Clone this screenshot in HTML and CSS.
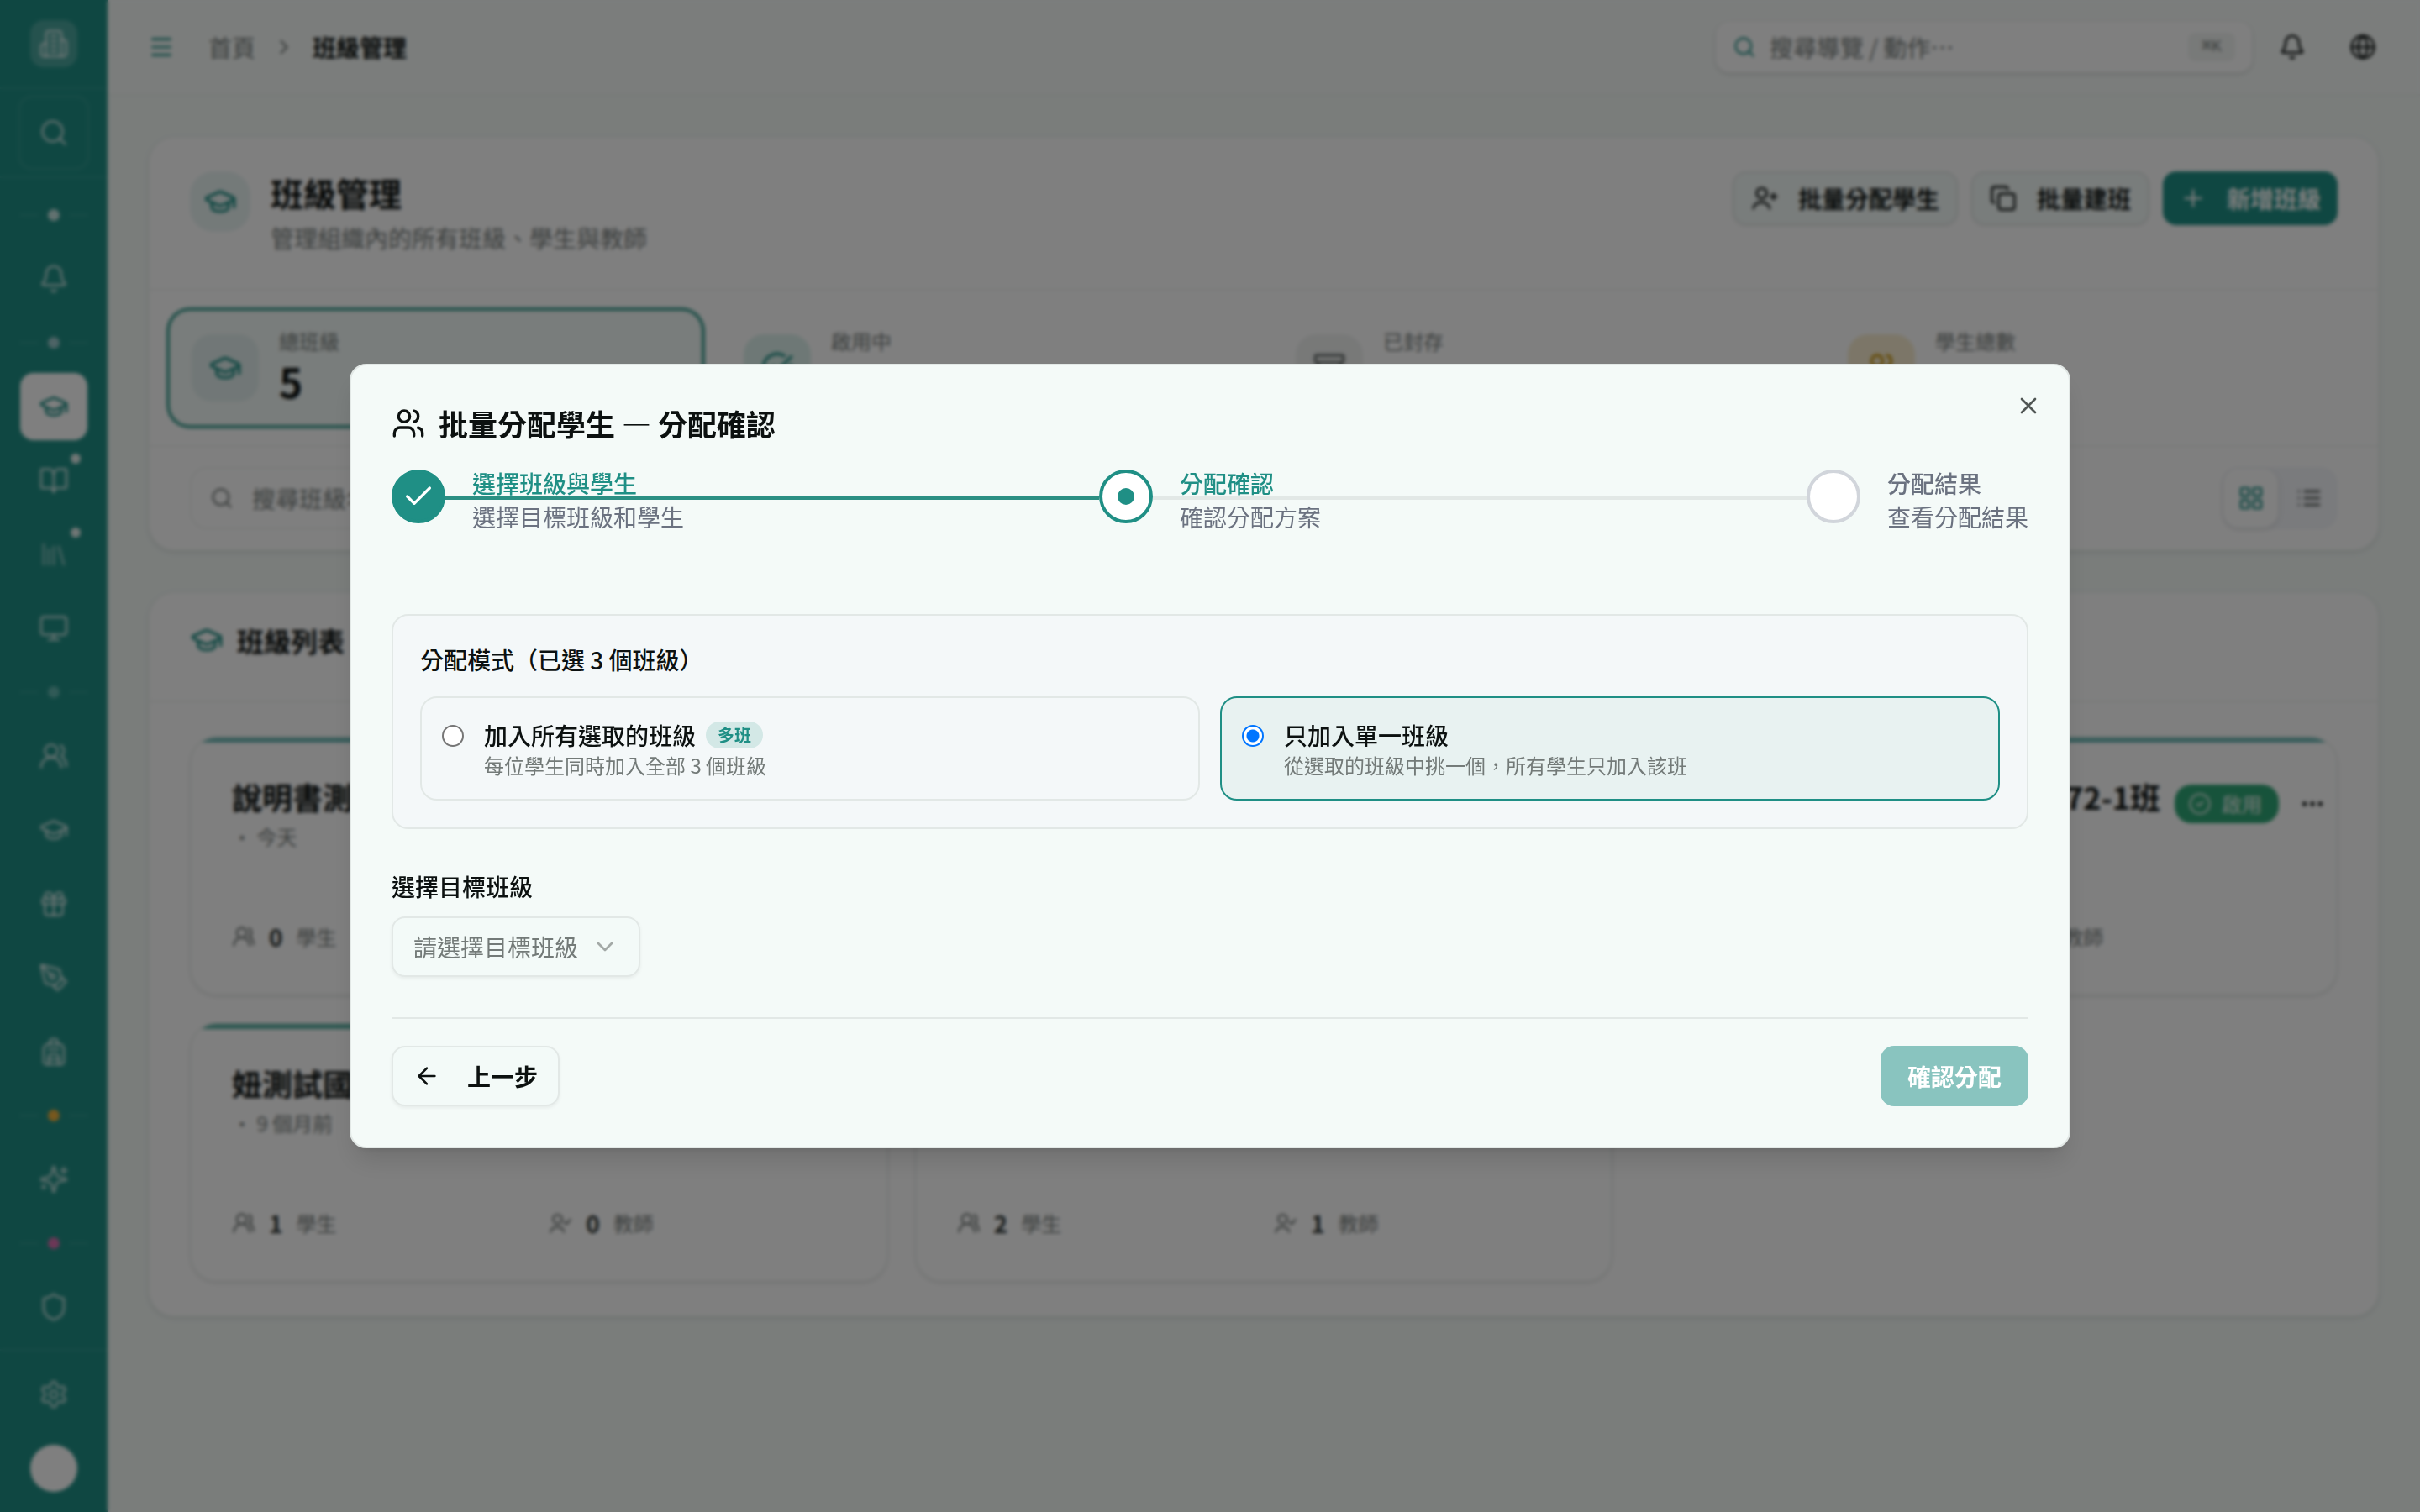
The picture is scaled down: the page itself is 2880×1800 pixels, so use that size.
FILE: index.html
```html
<!DOCTYPE html>
<html lang="zh-Hant">
<head>
<meta charset="utf-8">
<title>班級管理</title>
<link rel="stylesheet" href="styles.css">
</head>
<body>
<svg class="sprite" aria-hidden="true">
  <symbol id="i-building" viewBox="0 0 24 24"><path d="M6 22V4a2 2 0 0 1 2-2h8a2 2 0 0 1 2 2v18Z"/><path d="M6 12H4a2 2 0 0 0-2 2v6a2 2 0 0 0 2 2h2"/><path d="M18 9h2a2 2 0 0 1 2 2v9a2 2 0 0 1-2 2h-2"/><path d="M10 6h4M10 10h4M10 14h4M10 18h4"/></symbol>
  <symbol id="i-search" viewBox="0 0 24 24"><circle cx="11" cy="11" r="8"/><path d="m21 21-4.3-4.3"/></symbol>
  <symbol id="i-bell" viewBox="0 0 24 24"><path d="M10.268 21a2 2 0 0 0 3.464 0"/><path d="M3.262 15.326A1 1 0 0 0 4 17h16a1 1 0 0 0 .74-1.673C19.41 13.956 18 12.499 18 8A6 6 0 0 0 6 8c0 4.499-1.411 5.956-2.738 7.326"/></symbol>
  <symbol id="i-cap" viewBox="0 0 24 24"><path d="M21.42 10.922a1 1 0 0 0-.019-1.838L12.83 5.18a2 2 0 0 0-1.66 0L2.6 9.08a1 1 0 0 0 0 1.832l8.57 3.908a2 2 0 0 0 1.66 0z"/><path d="M22 10v6"/><path d="M6 12.5V16a6 3 0 0 0 12 0v-3.5"/></symbol>
  <symbol id="i-book" viewBox="0 0 24 24"><path d="M12 7v14"/><path d="M3 18a1 1 0 0 1-1-1V4a1 1 0 0 1 1-1h5a4 4 0 0 1 4 4 4 4 0 0 1 4-4h5a1 1 0 0 1 1 1v13a1 1 0 0 1-1 1h-6a3 3 0 0 0-3 3 3 3 0 0 0-3-3z"/></symbol>
  <symbol id="i-library" viewBox="0 0 24 24"><path d="m16 6 4 14"/><path d="M12 6v14"/><path d="M8 8v12"/><path d="M4 4v16"/></symbol>
  <symbol id="i-monitor" viewBox="0 0 24 24"><rect width="20" height="14" x="2" y="3" rx="2"/><path d="M8 21h8M12 17v4"/></symbol>
  <symbol id="i-users-round" viewBox="0 0 24 24"><path d="M18 21a8 8 0 0 0-16 0"/><circle cx="10" cy="8" r="5"/><path d="M22 20c0-3.37-2-6.5-4-8a5 5 0 0 0-.45-8.3"/></symbol>
  <symbol id="i-users" viewBox="0 0 24 24"><path d="M16 21v-2a4 4 0 0 0-4-4H6a4 4 0 0 0-4 4v2"/><circle cx="9" cy="7" r="4"/><path d="M22 21v-2a4 4 0 0 0-3-3.87"/><path d="M16 3.13a4 4 0 0 1 0 7.75"/></symbol>
  <symbol id="i-user-plus" viewBox="0 0 24 24"><path d="M2 21a7.5 7.5 0 0 1 14.500 0"/><circle cx="9.500" cy="7.500" r="4.500"/><path d="M20 8v5M22.500 10.500h-5"/></symbol>
  <symbol id="i-user-check" viewBox="0 0 24 24"><path d="M2 21a7 7 0 0 1 13.500 0"/><circle cx="9" cy="8" r="4.500"/><path d="m16 11 2 2 4-4.500"/></symbol>
  <symbol id="i-gift" viewBox="0 0 24 24"><rect x="3" y="8" width="18" height="4" rx="1"/><path d="M12 8v13"/><path d="M19 12v7a2 2 0 0 1-2 2H7a2 2 0 0 1-2-2v-7"/><path d="M7.5 8a2.5 2.5 0 0 1 0-5A4.8 8 0 0 1 12 8a4.8 8 0 0 1 4.5-5 2.5 2.5 0 0 1 0 5"/></symbol>
  <symbol id="i-pen" viewBox="0 0 24 24"><path d="M15.707 21.293a1 1 0 0 1-1.414 0l-1.586-1.586a1 1 0 0 1 0-1.414l5.586-5.586a1 1 0 0 1 1.414 0l1.586 1.586a1 1 0 0 1 0 1.414z"/><path d="m18 13-1.375-6.874a1 1 0 0 0-.746-.776L3.235 2.028a1 1 0 0 0-1.207 1.207L5.35 15.879a1 1 0 0 0 .776.746L13 18"/><path d="m2.3 2.3 7.286 7.286"/><circle cx="11" cy="11" r="2"/></symbol>
  <symbol id="i-backpack" viewBox="0 0 24 24"><path d="M4 10a4 4 0 0 1 4-4h8a4 4 0 0 1 4 4v10a2 2 0 0 1-2 2H6a2 2 0 0 1-2-2z"/><path d="M8 10h8M8 18h8"/><path d="M8 22v-6a2 2 0 0 1 2-2h4a2 2 0 0 1 2 2v6"/><path d="M9 6V4a2 2 0 0 1 2-2h2a2 2 0 0 1 2 2v2"/></symbol>
  <symbol id="i-sparkles" viewBox="0 0 24 24"><path d="M9.937 15.5A2 2 0 0 0 8.5 14.063l-6.135-1.582a.5.5 0 0 1 0-.962L8.5 9.936A2 2 0 0 0 9.937 8.5l1.582-6.135a.5.5 0 0 1 .963 0L14.063 8.5A2 2 0 0 0 15.5 9.937l6.135 1.581a.5.5 0 0 1 0 .964L15.5 14.063a2 2 0 0 0-1.437 1.437l-1.582 6.135a.5.5 0 0 1-.963 0z"/><path d="M20 3v4M22 5h-4M4 17v2M5 18H3"/></symbol>
  <symbol id="i-shield" viewBox="0 0 24 24"><path d="M20 13c0 5-3.5 7.5-7.66 8.95a1 1 0 0 1-.67-.01C7.5 20.5 4 18 4 13V6a1 1 0 0 1 1-1c2 0 4.5-1.2 6.24-2.72a1.17 1.17 0 0 1 1.52 0C14.51 3.81 17 5 19 5a1 1 0 0 1 1 1z"/></symbol>
  <symbol id="i-settings" viewBox="0 0 24 24"><path d="M12.22 2h-.44a2 2 0 0 0-2 2v.18a2 2 0 0 1-1 1.73l-.43.25a2 2 0 0 1-2 0l-.15-.08a2 2 0 0 0-2.73.73l-.22.38a2 2 0 0 0 .73 2.73l.15.1a2 2 0 0 1 1 1.72v.51a2 2 0 0 1-1 1.74l-.15.09a2 2 0 0 0-.73 2.73l.22.38a2 2 0 0 0 2.73.73l.15-.08a2 2 0 0 1 2 0l.43.25a2 2 0 0 1 1 1.73V20a2 2 0 0 0 2 2h.44a2 2 0 0 0 2-2v-.18a2 2 0 0 1 1-1.73l.43-.25a2 2 0 0 1 2 0l.15.08a2 2 0 0 0 2.73-.73l.22-.39a2 2 0 0 0-.73-2.73l-.15-.08a2 2 0 0 1-1-1.74v-.5a2 2 0 0 1 1-1.74l.15-.09a2 2 0 0 0 .73-2.73l-.22-.38a2 2 0 0 0-2.73-.73l-.15.08a2 2 0 0 1-2 0l-.43-.25a2 2 0 0 1-1-1.73V4a2 2 0 0 0-2-2z"/><circle cx="12" cy="12" r="3"/></symbol>
  <symbol id="i-menu" viewBox="0 0 24 24"><path d="M4 5h16M4 12h16M4 19h16"/></symbol>
  <symbol id="i-chevron-right" viewBox="0 0 24 24"><path d="m9 18 6-6-6-6"/></symbol>
  <symbol id="i-chevron-down" viewBox="0 0 24 24"><path d="m6 9 6 6 6-6"/></symbol>
  <symbol id="i-globe" viewBox="0 0 24 24"><circle cx="12" cy="12" r="10"/><path d="M12 2a14.5 14.5 0 0 0 0 20 14.5 14.5 0 0 0 0-20"/><path d="M2 12h20"/></symbol>
  <symbol id="i-copy" viewBox="0 0 24 24"><rect width="14" height="14" x="8" y="8" rx="2"/><path d="M4 16c-1.1 0-2-.9-2-2V4c0-1.1.9-2 2-2h10c1.1 0 2 .9 2 2"/></symbol>
  <symbol id="i-plus" viewBox="0 0 24 24"><path d="M5 12h14M12 5v14"/></symbol>
  <symbol id="i-check-big" viewBox="0 0 24 24"><path d="M21.801 10A10 10 0 1 1 17 3.335"/><path d="m9 11 3 3L22 4"/></symbol>
  <symbol id="i-circle-check" viewBox="0 0 24 24"><circle cx="12" cy="12" r="10"/><path d="m9 12 2 2 4-4"/></symbol>
  <symbol id="i-archive" viewBox="0 0 24 24"><rect width="20" height="5" x="2" y="3" rx="1"/><path d="M4 8v11a2 2 0 0 0 2 2h12a2 2 0 0 0 2-2V8"/><path d="M10 12h4"/></symbol>
  <symbol id="i-grid" viewBox="0 0 24 24"><rect width="7" height="7" x="3" y="3" rx="1"/><rect width="7" height="7" x="14" y="3" rx="1"/><rect width="7" height="7" x="14" y="14" rx="1"/><rect width="7" height="7" x="3" y="14" rx="1"/></symbol>
  <symbol id="i-list" viewBox="0 0 24 24"><path d="M8 6h13M8 12h13M8 18h13M3 6h.01M3 12h.01M3 18h.01"/></symbol>
  <symbol id="i-more" viewBox="0 0 24 24"><circle cx="12" cy="12" r="1"/><circle cx="19" cy="12" r="1"/><circle cx="5" cy="12" r="1"/></symbol>
  <symbol id="i-check" viewBox="0 0 24 24"><path d="M20 6 9 17l-5-5"/></symbol>
  <symbol id="i-x" viewBox="0 0 24 24"><path d="M18 6 6 18M6 6l12 12"/></symbol>
  <symbol id="i-arrow-left" viewBox="0 0 24 24"><path d="m12 19-7-7 7-7"/><path d="M19 12H5"/></symbol>
</svg>

<div class="app">
  <aside class="sidebar">
    <div class="brand"><span class="brand-mark"><svg class="icon icon-md"><use href="#i-building"/></svg></span></div>
    <div class="side-search"><button class="side-search-btn" type="button"><svg class="icon icon-md"><use href="#i-search"/></svg></button></div>
    <nav class="side-nav">
      <div class="side-sep"><i class="sep-dot"></i></div>
      <a class="side-item" href="#"><svg class="icon icon-md"><use href="#i-bell"/></svg></a>
      <div class="side-sep"><i class="sep-dot sep-blue"></i></div>
      <a class="side-item active" href="#"><svg class="icon icon-md"><use href="#i-cap"/></svg></a>
      <a class="side-item stacked" href="#"><svg class="icon icon-md"><use href="#i-book"/></svg><i class="note-dot"></i></a>
      <a class="side-item stacked dim" href="#"><svg class="icon icon-md"><use href="#i-library"/></svg><i class="note-dot"></i></a>
      <a class="side-item stacked" href="#"><svg class="icon icon-md"><use href="#i-monitor"/></svg></a>
      <div class="side-sep"><i class="sep-dot sep-teal"></i></div>
      <a class="side-item" href="#"><svg class="icon icon-md"><use href="#i-users-round"/></svg></a>
      <a class="side-item stacked" href="#"><svg class="icon icon-md"><use href="#i-cap"/></svg></a>
      <a class="side-item stacked" href="#"><svg class="icon icon-md"><use href="#i-gift"/></svg></a>
      <a class="side-item stacked" href="#"><svg class="icon icon-md"><use href="#i-pen"/></svg></a>
      <a class="side-item stacked" href="#"><svg class="icon icon-md"><use href="#i-backpack"/></svg></a>
      <div class="side-sep"><i class="sep-dot sep-amber"></i></div>
      <a class="side-item" href="#"><svg class="icon icon-md"><use href="#i-sparkles"/></svg></a>
      <div class="side-sep"><i class="sep-dot sep-pink"></i></div>
      <a class="side-item" href="#"><svg class="icon icon-md"><use href="#i-shield"/></svg></a>
    </nav>
    <div class="side-foot">
      <a class="side-item" href="#"><svg class="icon icon-md"><use href="#i-settings"/></svg></a>
      <a class="side-item stacked" href="#"><span class="avatar"></span></a>
    </div>
  </aside>

  <div class="page">
    <header class="topbar">
      <button class="menu-btn" type="button"><svg class="icon icon-sm"><use href="#i-menu"/></svg></button>
      <nav class="crumbs">
        <a href="#">首頁</a>
        <svg class="icon icon-xs"><use href="#i-chevron-right"/></svg>
        <span class="crumb-now">班級管理</span>
      </nav>
      <div class="top-tools">
        <button class="quick-search" type="button"><svg class="icon icon-xs"><use href="#i-search"/></svg><span class="quick-label">搜尋導覽 / 動作⋯</span><kbd>⌘K</kbd></button>
        <button class="tool-btn" type="button"><svg class="icon icon-sm"><use href="#i-bell"/></svg></button>
        <button class="tool-btn" type="button"><svg class="icon icon-sm"><use href="#i-globe"/></svg></button>
      </div>
    </header>

    <main class="content">
      <section class="panel">
        <div class="hero">
          <span class="hero-icon"><svg class="icon icon-lg"><use href="#i-cap"/></svg></span>
          <div class="hero-text">
            <h1>班級管理</h1>
            <p>管理組織內的所有班級、學生與教師</p>
          </div>
          <div class="hero-actions">
            <button class="btn" type="button"><svg class="icon icon-sm"><use href="#i-user-plus"/></svg>批量分配學生</button>
            <button class="btn" type="button"><svg class="icon icon-sm"><use href="#i-copy"/></svg>批量建班</button>
            <button class="btn btn-solid" type="button"><svg class="icon icon-sm"><use href="#i-plus"/></svg>新增班級</button>
          </div>
        </div>
        <div class="stats">
          <div class="stat selected"><span class="tile"><svg class="icon icon-lg"><use href="#i-cap"/></svg></span><div class="stat-text"><span class="stat-label">總班級</span><strong>5</strong></div></div>
          <div class="stat"><span class="tile tile-green"><svg class="icon icon-lg"><use href="#i-check-big"/></svg></span><div class="stat-text"><span class="stat-label">啟用中</span></div></div>
          <div class="stat"><span class="tile tile-gray"><svg class="icon icon-lg"><use href="#i-archive"/></svg></span><div class="stat-text"><span class="stat-label">已封存</span></div></div>
          <div class="stat"><span class="tile tile-amber"><svg class="icon icon-lg"><use href="#i-users"/></svg></span><div class="stat-text"><span class="stat-label">學生總數</span></div></div>
        </div>
        <div class="filters">
          <label class="filter-search"><svg class="icon icon-xs"><use href="#i-search"/></svg><input type="search" placeholder="搜尋班級名" aria-label="搜尋班級"></label>
          <div class="view-toggle">
            <button class="view-btn on" type="button"><svg class="icon icon-sm"><use href="#i-grid"/></svg></button>
            <button class="view-btn" type="button"><svg class="icon icon-sm"><use href="#i-list"/></svg></button>
          </div>
        </div>
      </section>

      <section class="panel">
        <div class="list-head"><svg class="icon icon-lg"><use href="#i-cap"/></svg><h2>班級列表</h2></div>
        <div class="class-grid">
          <article class="class-card">
            <div class="class-head"><h3>說明書測</h3></div>
            <p class="class-date">・ 今天</p>
            <div class="class-stats">
              <span class="count"><svg class="icon icon-xs"><use href="#i-users-round"/></svg><b>0</b>學生</span>
            </div>
          </article>
          <article class="class-card"></article>
          <article class="class-card">
            <div class="class-head class-head-end"><h3>72-1班</h3><span class="status"><svg class="icon icon-xs"><use href="#i-circle-check"/></svg>啟用</span><button class="more-btn" type="button"><svg class="icon icon-sm"><use href="#i-more"/></svg></button></div>
            <div class="class-stats">
              <span class="count"><svg class="icon icon-xs"><use href="#i-users-round"/></svg><b>0</b>學生</span>
              <span class="count"><svg class="icon icon-xs"><use href="#i-user-check"/></svg><b>0</b>教師</span>
            </div>
          </article>
          <article class="class-card green">
            <div class="class-head"><h3>妞測試國</h3></div>
            <p class="class-date">・ 9 個月前</p>
            <div class="class-stats">
              <span class="count"><svg class="icon icon-xs"><use href="#i-users-round"/></svg><b>1</b>學生</span>
              <span class="count"><svg class="icon icon-xs"><use href="#i-user-check"/></svg><b>0</b>教師</span>
            </div>
          </article>
          <article class="class-card green">
            <div class="class-stats">
              <span class="count"><svg class="icon icon-xs"><use href="#i-users-round"/></svg><b>2</b>學生</span>
              <span class="count"><svg class="icon icon-xs"><use href="#i-user-check"/></svg><b>1</b>教師</span>
            </div>
          </article>
        </div>
      </section>
    </main>
  </div>
</div>

<div class="overlay">
  <div class="dialog" role="dialog" aria-modal="true" aria-labelledby="dialog-title">
    <button class="close-btn" type="button" aria-label="關閉"><svg class="icon icon-sm"><use href="#i-x"/></svg></button>
    <h2 class="dialog-title" id="dialog-title"><svg class="icon icon-lg"><use href="#i-users"/></svg>批量分配學生 — 分配確認</h2>
    <ol class="steps">
      <li class="step done">
        <span class="step-mark"><svg class="icon icon-lg"><use href="#i-check"/></svg></span>
        <div class="step-text"><strong>選擇班級與學生</strong><span>選擇目標班級和學生</span></div>
      </li>
      <li class="step current">
        <span class="step-mark"></span>
        <div class="step-text"><strong>分配確認</strong><span>確認分配方案</span></div>
      </li>
      <li class="step">
        <span class="step-mark"></span>
        <div class="step-text"><strong>分配結果</strong><span>查看分配結果</span></div>
      </li>
    </ol>
    <fieldset class="mode">
      <legend>分配模式（已選 3 個班級）</legend>
      <div class="mode-options">
        <label class="option">
          <input type="radio" name="mode">
          <span class="option-text"><span class="option-title">加入所有選取的班級<em class="tag">多班</em></span><span class="option-desc">每位學生同時加入全部 3 個班級</span></span>
        </label>
        <label class="option">
          <input type="radio" name="mode" checked>
          <span class="option-text"><span class="option-title">只加入單一班級</span><span class="option-desc">從選取的班級中挑一個，所有學生只加入該班</span></span>
        </label>
      </div>
    </fieldset>
    <div class="field">
      <label for="target">選擇目標班級</label>
      <div class="select-wrap">
        <select id="target"><option>請選擇目標班級</option></select>
        <svg class="icon icon-sm select-arrow"><use href="#i-chevron-down"/></svg>
      </div>
    </div>
    <div class="dialog-foot">
      <button class="btn btn-back" type="button"><svg class="icon icon-sm"><use href="#i-arrow-left"/></svg>上一步</button>
      <button class="btn btn-confirm" type="button" disabled>確認分配</button>
    </div>
  </div>
</div>
</body>
</html>
```
FILE: styles.css
```css
:root {
  --primary: #1f8f85;
  --ink: #0c1110;
  --muted: #737a78;
  --slate: #6b7280;
  --line: #e2e8e6;
  --surface: #f3faf8;
}

* { box-sizing: border-box; margin: 0; padding: 0; }

body {
  font-family: "Noto Sans CJK TC", "Noto Sans", sans-serif;
  font-size: 28px;
  line-height: 40px;
  color: var(--ink);
  background: #f4faf7;
}

button, input, select { font: inherit; color: inherit; }
button { border: 0; background: none; display: flex; align-items: center; justify-content: center; }
a { color: inherit; text-decoration: none; }

.sprite { display: none; }
.icon { fill: none; stroke: currentColor; stroke-width: 2; stroke-linecap: round; stroke-linejoin: round; flex: none; display: block; }
.icon-xs { width: 28px; height: 28px; }
.icon-sm { width: 32px; height: 32px; }
.icon-md { width: 36px; height: 36px; }
.icon-lg { width: 40px; height: 40px; }

.app { display: flex; min-height: 100vh; }

/* Sidebar */
.sidebar { width: 128px; flex: none; display: flex; flex-direction: column; background: var(--primary); color: rgba(255, 255, 255, .65); }
.brand { height: 106px; display: flex; align-items: center; justify-content: center; border-bottom: 2px solid rgba(255, 255, 255, .08); }
.brand-mark { width: 56px; height: 56px; border-radius: 16px; background: rgba(255, 255, 255, .2); display: flex; align-items: center; justify-content: center; }
.side-search { padding: 8px 22px; border-bottom: 2px solid rgba(255, 255, 255, .08); }
.side-search-btn { width: 100%; height: 88px; border: 2px solid rgba(255, 255, 255, .1); border-radius: 16px; }
.side-nav { flex: 1; padding: 8px 24px; }
.side-item { position: relative; height: 80px; border-radius: 16px; display: flex; align-items: center; justify-content: center; }
.side-item.stacked { margin-top: 8px; }
.side-item.active { background: #fff; color: var(--primary); }
.side-item.dim { color: rgba(255, 255, 255, .45); }
.note-dot { position: absolute; top: 8px; right: 8px; width: 12px; height: 12px; border-radius: 50%; background: #e4efed; }
.side-sep { height: 72px; display: flex; align-items: center; gap: 12px; }
.side-sep::before, .side-sep::after { content: ""; flex: 1; height: 2px; background: rgba(255, 255, 255, .1); }
.sep-dot { width: 14px; height: 14px; border-radius: 50%; background: #c4e3e0; }
.sep-blue { background: #9cc8cc; }
.sep-teal { background: #62b5ae; }
.sep-amber { background: #f0b03c; }
.sep-pink { background: #d96fae; }
.side-foot { padding: 12px 24px; border-top: 2px solid rgba(255, 255, 255, .08); }
.avatar { width: 56px; height: 56px; border-radius: 50%; background: #fff; }

/* Top bar */
.page { flex: 1; min-width: 0; }
.topbar { height: 114px; padding: 0 32px 0 48px; display: flex; align-items: center; gap: 40px; background: #f7fbf9; border-bottom: 2px solid #edf3f0; }
.menu-btn { color: var(--primary); }
.crumbs { display: flex; align-items: center; gap: 20px; color: var(--muted); }
.crumb-now { color: var(--ink); font-weight: 700; }
.top-tools { margin-left: auto; display: flex; align-items: center; gap: 12px; }
.quick-search { width: 638px; height: 60px; padding: 0 20px; gap: 16px; background: #fff; border-radius: 16px; box-shadow: 0 2px 6px rgba(0, 0, 0, .14); color: var(--muted); }
.quick-search .icon { color: var(--primary); }
.quick-label { flex: 1; text-align: left; }
kbd { width: 56px; height: 34px; border-radius: 8px; background: #f1f4f2; font-family: "Liberation Mono", monospace; font-size: 20px; line-height: 34px; text-align: center; }
.tool-btn { width: 72px; height: 72px; }

/* Panels */
.content { padding: 48px; display: flex; flex-direction: column; gap: 48px; }
.panel { background: #fff; border: 2px solid #eff5f2; border-radius: 32px; box-shadow: 0 2px 4px rgba(0, 0, 0, .1); }
.hero { display: flex; align-items: flex-start; gap: 24px; padding: 40px 48px; border-bottom: 2px solid #f0f4f2; }
.hero-icon { width: 72px; height: 72px; border-radius: 28px; background: #e9f4f3; color: var(--primary); display: flex; align-items: center; justify-content: center; }
.hero-text { flex: 1; }
.hero h1 { font-size: 39px; line-height: 50px; font-weight: 700; }
.hero p { margin-top: 8px; line-height: 42px; color: var(--muted); }
.hero-actions { display: flex; gap: 16px; }

.btn { height: 64px; padding: 0 20px; gap: 24px; border: 2px solid var(--line); border-radius: 16px; background: var(--surface); font-weight: 700; box-shadow: 0 2px 4px rgba(0, 0, 0, .06); }
.btn-solid { border: 0; background: var(--primary); color: #fff; }

.stats { display: grid; grid-template-columns: repeat(4, 1fr); gap: 24px; padding: 24px; border-bottom: 2px solid #f0f4f2; }
.stat { height: 136px; padding: 0 26px; display: flex; align-items: center; gap: 24px; border-radius: 24px; }
.stat.selected { background: #f3faf8; box-shadow: 0 0 0 4px #3f9f92; }
.tile { width: 80px; height: 80px; border-radius: 24px; background: #e2efee; color: var(--primary); display: flex; align-items: center; justify-content: center; }
.tile-green { background: #dcf1ec; }
.tile-gray { background: #f0f2f1; color: #6b7270; }
.tile-amber { background: #f8edd0; color: #c9960f; }
.stat-text { min-height: 96px; display: flex; flex-direction: column; gap: 4px; }
.stat-label { font-size: 24px; line-height: 32px; color: var(--muted); }
.stat strong { font-size: 48px; line-height: 54px; font-weight: 700; }

.filters { display: flex; justify-content: space-between; padding: 24px 48px; }
.filter-search { width: 720px; height: 74px; padding: 0 22px; display: flex; align-items: center; gap: 22px; border: 2px solid #f0f4f2; border-radius: 20px; color: var(--muted); }
.filter-search input { flex: 1; min-width: 0; border: 0; outline: 0; background: none; }
.filter-search input::placeholder { color: inherit; }
.view-toggle { width: 138px; height: 74px; padding: 2px; display: flex; gap: 4px; border-radius: 20px; background: #f4f6fa; }
.view-btn { flex: 1; border-radius: 18px; color: #454b49; }
.view-btn.on { background: #fff; color: var(--primary); box-shadow: 0 2px 6px rgba(0, 0, 0, .12); }

.list-head { display: flex; align-items: center; gap: 16px; padding: 32px 48px 48px; border-bottom: 2px solid #f0f4f2; color: var(--primary); }
.list-head h2 { font-size: 32px; line-height: 48px; font-weight: 700; color: var(--ink); }
.class-grid { display: grid; grid-template-columns: repeat(3, 1fr); gap: 32px; padding: 40px 48px; }
.class-card { min-height: 309px; padding: 40px 48px 50px; display: flex; flex-direction: column; overflow: hidden; border: 2px solid #eff3f1; border-radius: 32px; box-shadow: 0 2px 4px rgba(0, 0, 0, .1); }
.class-card::before { content: ""; height: 6px; flex: none; margin: -40px -48px 40px; background: #6cb8b5; }
.class-card.green::before { background: #55aea0; }
.class-head { display: flex; align-items: center; gap: 17px; }
.class-head-end { align-items: flex-start; justify-content: flex-end; margin-right: -43px; }
.class-head h3 { font-size: 36px; line-height: 48px; font-weight: 700; white-space: nowrap; }
.status { height: 46px; padding: 0 20px 0 16px; margin-top: 10px; display: flex; align-items: center; gap: 12px; border-radius: 20px; background: #2fa676; color: #cfe9de; font-size: 24px; font-weight: 500; }
.more-btn { width: 46px; height: 46px; margin-top: 10px; }
.class-date { margin-top: 6px; font-size: 24px; line-height: 36px; color: var(--muted); }
.class-stats { margin-top: auto; display: grid; grid-template-columns: 1fr 1fr; gap: 24px; }
.count { display: flex; align-items: center; gap: 16px; font-size: 24px; line-height: 36px; color: var(--muted); }
.count b { font-size: 28px; font-weight: 700; color: #2c3331; }

/* Dialog */
.overlay { position: fixed; inset: 0; display: flex; align-items: center; justify-content: center; background: rgba(0, 0, 0, .5); backdrop-filter: blur(2px); }
.dialog { position: relative; width: 100%; max-width: 2048px; padding: 48px; background: #f4faf8; border: 2px solid #e2e8e6; border-radius: 20px; box-shadow: 0 20px 30px -6px rgba(0, 0, 0, .12), 0 8px 12px -8px rgba(0, 0, 0, .12); }
.close-btn { position: absolute; top: 32px; right: 32px; color: #505654; }
.dialog-title { display: flex; align-items: center; gap: 16px; font-size: 35px; line-height: 42px; font-weight: 700; }

.steps { display: flex; margin-top: 30px; list-style: none; color: var(--slate); }
.step { position: relative; display: flex; gap: 32px; }
.step:not(:last-child) { flex: 1; }
.step:not(:last-child)::after { content: ""; position: absolute; top: 36px; left: 64px; right: 0; height: 4px; background: #e2e8e6; }
.step.done:not(:last-child)::after { background: #2b8f83; }
.step-mark { width: 64px; height: 64px; margin-top: 4px; flex: none; border: 4px solid #d1d5db; border-radius: 50%; background: #fff; display: flex; align-items: center; justify-content: center; color: #fff; }
.step.done .step-mark { background: var(--primary); border-color: var(--primary); }
.step.current .step-mark { border-color: var(--primary); }
.step.current .step-mark::before { content: ""; width: 20px; height: 20px; border-radius: 50%; background: var(--primary); }
.step-text { position: relative; z-index: 1; display: flex; flex-direction: column; }
.step-text strong { font-weight: 500; }
.step.done strong, .step.current strong { color: var(--primary); }

.mode { margin-top: 96px; padding: 32px; border: 2px solid var(--line); border-radius: 20px; background: #f4f8f9; }
.mode legend { float: left; width: 100%; font-weight: 500; margin-bottom: 24px; }
.mode-options { clear: both; display: grid; grid-template-columns: 1fr 1fr; gap: 24px; }
.option { display: flex; gap: 24px; padding: 24px; border: 2px solid var(--line); border-radius: 20px; }
.option:has(:checked) { background: #e8f2f1; border-color: var(--primary); }
.option input { appearance: none; flex: none; width: 26px; height: 26px; margin-top: 8px; border: 2px solid #767676; border-radius: 50%; background: #fff; }
.option input:checked { border-color: #0075ff; background: radial-gradient(circle, #0075ff 7px, #fff 8px); }
.option-text { display: flex; flex-direction: column; }
.option-title { display: flex; align-items: center; gap: 12px; font-weight: 500; }
.option-desc { font-size: 24px; line-height: 32px; color: var(--muted); }
.tag { padding: 0 14px; border-radius: 16px; background: #d3e8e6; color: var(--primary); font-size: 20px; line-height: 32px; font-style: normal; font-weight: 700; }

.field { margin-top: 48px; }
.field label { display: block; font-weight: 500; }
.select-wrap { position: relative; width: fit-content; margin-top: 16px; }
.select-wrap select { display: block; height: 72px; padding: 0 71px 0 24px; appearance: none; border: 2px solid var(--line); border-radius: 16px; background: var(--surface); color: var(--muted); box-shadow: 0 2px 4px rgba(0, 0, 0, .06); }
.select-arrow { position: absolute; top: 20px; right: 26px; color: #a3a9a7; pointer-events: none; }

.dialog-foot { display: flex; justify-content: space-between; margin-top: 48px; padding-top: 32px; border-top: 2px solid var(--line); }
.dialog-foot .btn { height: 72px; }
.btn-back { padding: 0 24px; gap: 32px; }
.btn-confirm { padding: 0 32px; border: 0; background: #89c4bf; color: #fff; box-shadow: none; }
```
